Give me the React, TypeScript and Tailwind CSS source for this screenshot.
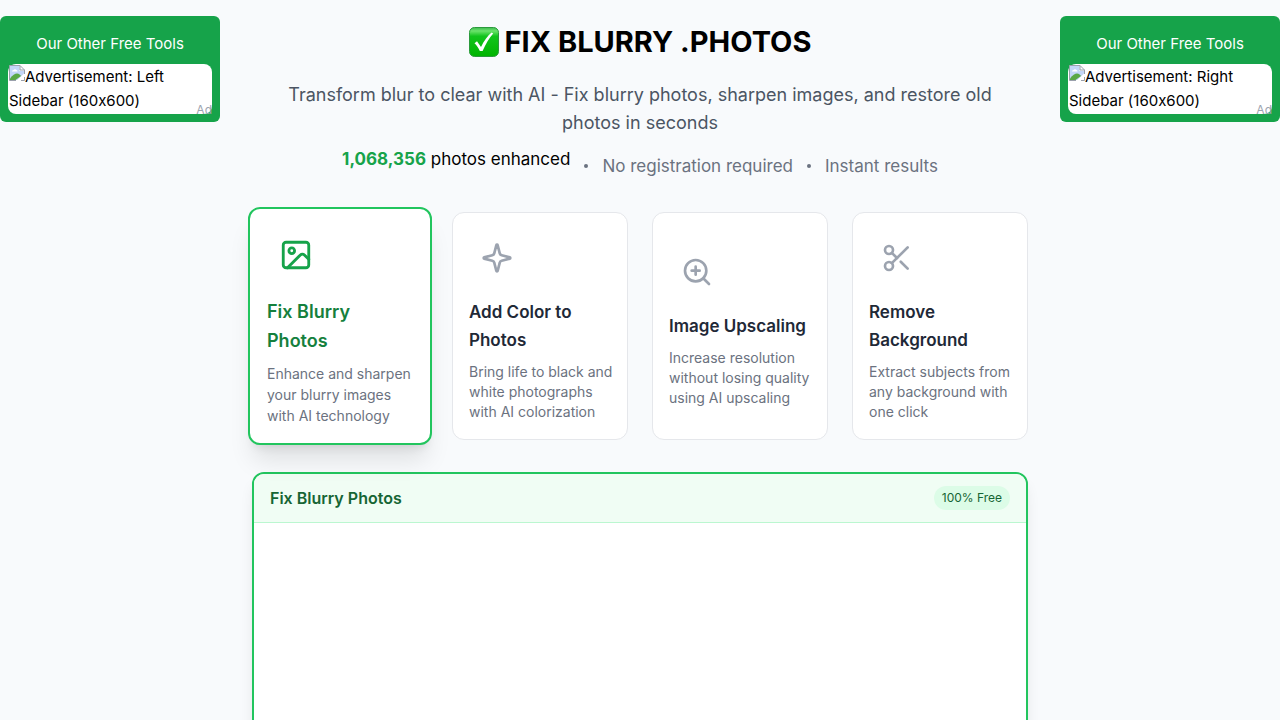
import React from 'react'
import clsx from 'clsx'
import { Image, Scissors, ZoomIn } from 'lucide-react'

type Tool = {
    title: string
    description: string
    icon: React.ElementType
}

const tools: Tool[] = [
    {
        title: 'Fix Blurry Photos',
        description: 'Enhance and sharpen your blurry images with AI technology',
        icon: Image,
    },
    {
        title: 'Add Color to Photos',
        description: 'Bring life to black and white photographs with AI colorization',
        icon: StarIcon,
    },
    {
        title: 'Image Upscaling',
        description: 'Increase resolution without losing quality using AI upscaling',
        icon: ZoomIn,
    },
    {
        title: 'Remove Background',
        description: 'Extract subjects from any background with one click',
        icon: Scissors,
    },
]

const App = () => {
    const [active, setActive] = React.useState(0)

    return (
        <div className="flex min-h-screen items-start bg-[#f8fafc] font-[Inter,sans-serif] text-black [font-feature-settings:'calt'_0]">
            <AdSidebar side="Left" />
            <main className="min-w-0 flex-1 px-8 pt-6">
                <header className="flex flex-col items-center text-center">
                    <h1 className="flex items-center gap-[6px] text-[29px] leading-9 font-bold">
                        <CheckMark />
                        FIX BLURRY .PHOTOS
                    </h1>
                    <p className="mt-[21px] max-w-[736px] text-lg leading-7 text-[#4b5563]">
                        Transform blur to clear with AI - Fix blurry photos, sharpen images, and restore old photos in seconds
                    </p>
                    <div className="mt-2 flex items-center gap-3 text-[17px] leading-7 text-[#6b7280]">
                        <div className="pb-[14px] text-black">
                            <span className="font-bold text-[#16a34a]">1,068,356</span> photos enhanced
                        </div>
                        <Dot />
                        <span>No registration required</span>
                        <Dot />
                        <span>Instant results</span>
                    </div>
                </header>

                <section className="mt-[25px] grid grid-cols-4 gap-6">
                    {tools.map((tool, i) => (
                        <ToolCard key={tool.title} tool={tool} active={i === active} onClick={() => setActive(i)} />
                    ))}
                </section>

                <section className="mt-8 overflow-hidden rounded-xl border-2 border-[#22c55e] bg-white shadow-lg">
                    <div className="flex items-center justify-between border-b border-[#bbf7d0] bg-[#f0fdf4] px-4 py-3">
                        <h2 className="text-base leading-6 font-semibold text-[#166534]">{tools[active].title}</h2>
                        <span className="rounded-full bg-[#dcfce7] px-2 py-1 text-xs leading-4 text-[#166534]">100% Free</span>
                    </div>
                    <div className="min-h-96"></div>
                </section>
            </main>
            <AdSidebar side="Right" />
        </div>
    )
}

type CardProps = {
    tool: Tool
    active: boolean
    onClick: () => void
}

const ToolCard = ({ tool, active, onClick }: CardProps) => {
    const Icon = tool.icon

    return (
        <button
            type="button"
            onClick={onClick}
            className={clsx(
                'flex flex-col items-start justify-center rounded-xl bg-white text-left',
                active
                    ? 'z-10 -mx-1 -my-[5px] border-2 border-[#22c55e] p-[17px] shadow-xl'
                    : 'border border-[#e5e7eb] p-4 pr-3'
            )}
        >
            <span className={clsx('p-3', active ? 'mb-[13px] text-[#16a34a]' : 'mb-3 text-[#9ca3af]')}>
                <Icon size={active ? 34 : 32} strokeWidth={2} />
            </span>
            <h3
                className={clsx(
                    'mb-2 font-semibold',
                    active ? 'text-lg leading-[29px] text-[#15803d]' : 'text-[17px] leading-7 text-[#1f2937]'
                )}
            >
                {tool.title}
            </h3>
            <p className={clsx('text-sm text-[#6b7280]', active ? 'leading-[21px]' : 'leading-5')}>
                {tool.description}
            </p>
        </button>
    )
}

const AdSidebar = ({ side }: { side: string }) => {
    return (
        <aside className="mt-4 w-[220px] shrink-0 rounded-md bg-[#16a34a] p-2">
            <h4 className="py-2 text-center text-[15px] leading-6 text-white">Our Other Free Tools</h4>
            <a href="#" className="relative block rounded-lg bg-white p-px text-[15px] leading-6">
                <BrokenImage />
                Advertisement: {side} Sidebar (160x600)
                <span className="absolute right-0 -bottom-1 text-xs leading-4 text-[#9ca3af]">Ad</span>
            </a>
        </aside>
    )
}

const Dot = () => <span className="mx-[2px] size-1 rounded-full bg-[#6b7280]"></span>

function StarIcon({ size = 32, strokeWidth = 2 }: { size?: number; strokeWidth?: number }) {
    return (
        <svg width={size} height={size} viewBox="0 0 24 24" fill="none" stroke="currentColor" strokeWidth={strokeWidth} strokeLinecap="round" strokeLinejoin="round">
            <path d="M9.937 15.5A2 2 0 0 0 8.5 14.063l-6.135-1.582a.5.5 0 0 1 0-.962L8.5 9.936A2 2 0 0 0 9.937 8.5l1.582-6.135a.5.5 0 0 1 .963 0L14.063 8.5A2 2 0 0 0 15.5 9.937l6.135 1.581a.5.5 0 0 1 0 .964L15.5 14.063a2 2 0 0 0-1.437 1.437l-1.582 6.135a.5.5 0 0 1-.963 0z" />
        </svg>
    )
}

const CheckMark = () => (
    <svg width="30" height="30" viewBox="0 0 30 30" aria-hidden="true">
        <defs>
            <linearGradient id="check-bg" x1="0" y1="0" x2="0" y2="1">
                <stop offset="0" stopColor="#3fb950" />
                <stop offset="0.12" stopColor="#6be36b" />
                <stop offset="0.3" stopColor="#12c41c" />
                <stop offset="1" stopColor="#00b400" />
            </linearGradient>
        </defs>
        <rect x="0.5" y="0.5" width="29" height="29" rx="5" fill="url(#check-bg)" stroke="#2b9a3c" />
        <path d="M5.5 16.2 8 14.3l4 5.6C15 14 18.5 9 22.6 5.6l1.6 1C20 11.5 16.5 17.5 13.6 24h-2.8C9.5 21 7.5 18 5.5 16.2Z" fill="#fff" />
    </svg>
)

const BrokenImage = () => (
    <svg className="inline-block align-top" width="16" height="16" viewBox="0 0 16 16" aria-hidden="true">
        <path d="M0.5 0.5h10.5l4.5 4.5v10.5h-15z" fill="#fff" />
        <path d="M1 1h9.5v5H15v2.5L8.5 15H1z" fill="#c3d6f7" />
        <path d="M3 6.500a1.500 1.500 0 0 1 1.500-1.500 1.800 1.800 0 0 1 3 0 1.500 1.500 0 0 1 1 1.500z" fill="#fff" />
        <path d="M1 15v-1.500C3.500 10 6 8.500 8 8.500s3.500 1.500 4 2.500L6.500 15z" fill="#5aa845" />
        <path d="M7 16 16 9v3l-4.500 4z" fill="#fff" />
        <path d="M7 15.5H0.5v-15H11L15.5 5v4M11 0.5V5h4.500M12 15.5h3.500V12" fill="none" stroke="#9aa0ac" />
    </svg>
)

export default App
